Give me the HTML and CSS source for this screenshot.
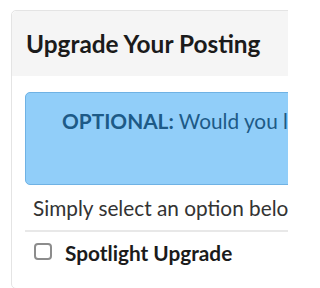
FILE: index.html
```html
<!DOCTYPE html>
<html>
<head>
<meta charset="utf-8">
<link rel="stylesheet" href="styles.css">
</head>
<body>
<div class="viewport">
  <div class="card">
    <div class="card-header">
      <h2 class="title">Upgrade Your Posting</h2>
    </div>
    <div class="card-body">
      <div class="alert"><strong>OPTIONAL:</strong> Would you like to make your posting stand out?</div>
      <p class="intro">Simply select an option below to upgrade.</p>
      <div class="option">
        <span class="check"></span>
        <span class="option-label">Spotlight Upgrade</span>
      </div>
    </div>
  </div>
</div>
</body>
</html>
```

FILE: styles.css
```css
html, body {
  margin: 0;
  padding: 0;
  background: #ffffff;
  font-family: Lato, "Open Sans", sans-serif;
}
.viewport {
  width: 288px;
  height: 288px;
  overflow: hidden;
  padding: 10px 0 0 11px;
  box-sizing: border-box;
}
.card {
  width: 460px;
  border: 1px solid #e4e4e4;
  border-radius: 5px;
  background: #fff;
}
.card-header {
  background: #f5f5f5;
  height: 65px;
  padding: 0 14px;
  display: flex;
  align-items: center;
  border-radius: 5px 5px 0 0;
}
.title {
  margin: 0;
  font-size: 24.4px;
  line-height: 30px;
  font-weight: 700;
  color: #1b1b1b;
  white-space: nowrap;
}
.card-body {
  padding: 16px 0 20px 13px;
}
.alert {
  height: 93px;
  box-sizing: border-box;
  background: #91cef9;
  border: 1px solid #6fb2e4;
  border-radius: 5px;
  color: #1d5a87;
  font-size: 20.8px;
  line-height: 30px;
  padding: 13px 0 0 36px;
  white-space: nowrap;
}
.alert strong {
  font-weight: 700;
}
.intro {
  margin: 8px 0 0;
  padding: 0 0 7px 8px;
  font-size: 20.8px;
  line-height: 30px;
  color: #333;
  white-space: nowrap;
  border-bottom: 2px solid #e8e8e8;
}
.option {
  display: flex;
  align-items: center;
  padding: 6px 0 0 9px;
}
.check {
  width: 18px;
  height: 17px;
  box-sizing: border-box;
  border: 2px solid #8c8c8c;
  border-radius: 4px;
  background: #fff;
  flex: none;
  margin-top: -3px;
}
.option-label {
  margin-left: 13px;
  font-size: 20.8px;
  line-height: 30px;
  font-weight: 700;
  color: #1b1b1b;
  white-space: nowrap;
}
```
